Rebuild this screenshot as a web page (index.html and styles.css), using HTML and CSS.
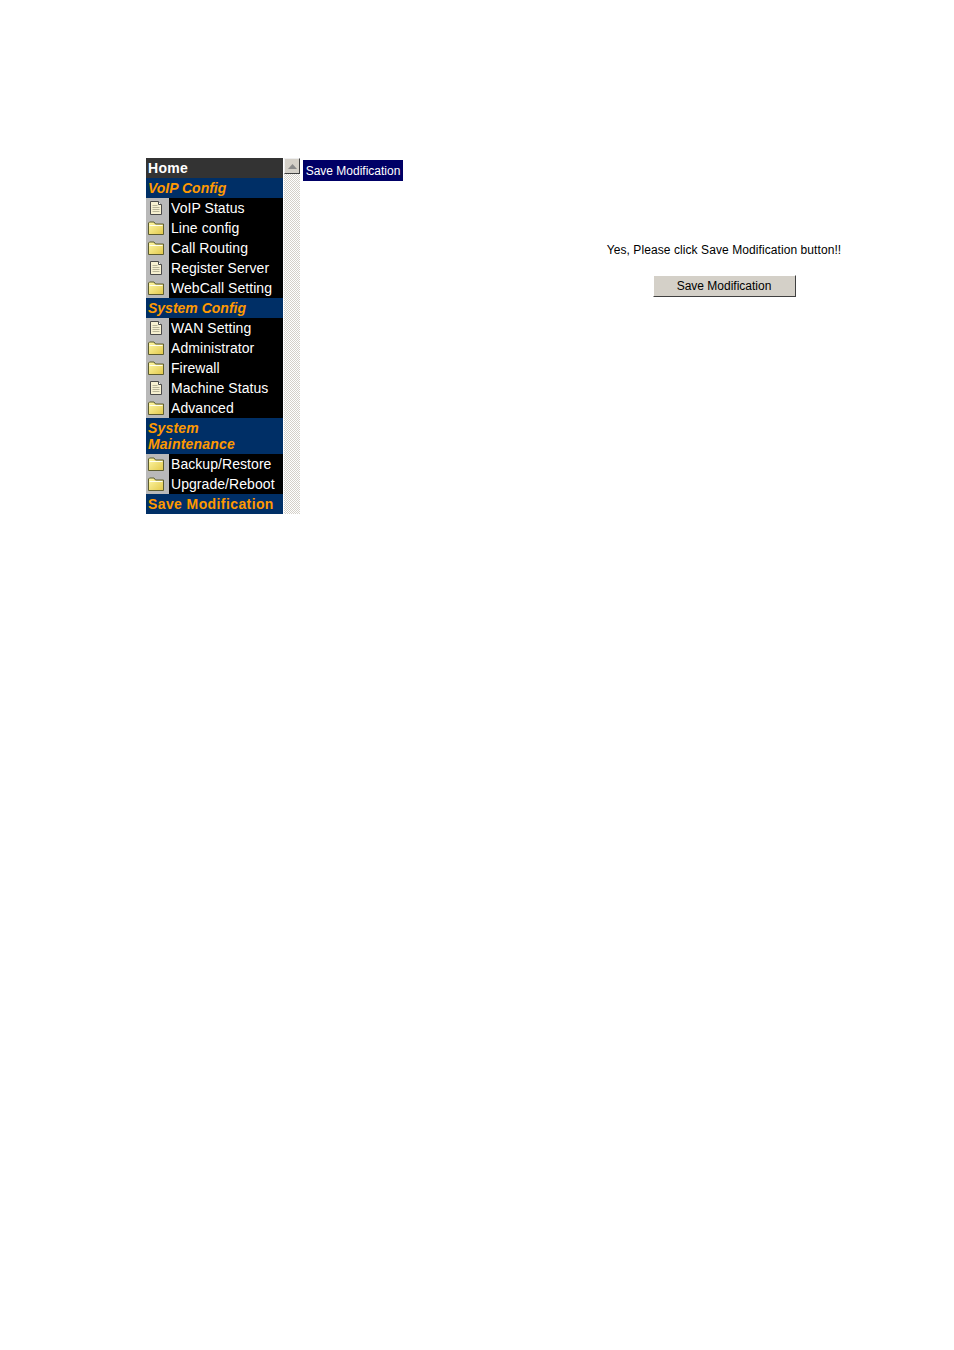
FILE: index.html
```html
<!DOCTYPE html>
<html lang="en">
<head>
    <meta charset="UTF-8">
    <title>Save Modification</title>
    <link rel="stylesheet" href="styles.css">
</head>
<body>
    <svg class="icon-defs" width="0" height="0">
        <defs>
            <linearGradient id="folderFill" x1="0" y1="0" x2="1" y2="1">
                <stop offset="0" stop-color="#fff9a8"/>
                <stop offset="1" stop-color="#e2c84a"/>
            </linearGradient>
            <symbol id="page" viewBox="0 0 16 16">
                <path d="M2.500 1.500H10.500L13.500 4.500V14.500H2.500Z" fill="#f6f0d0" stroke="#4a4a4a"/>
                <path d="M10.500 1.500V4.500H13.500" fill="#fff" stroke="#4a4a4a"/>
                <path d="M4.500 5.500H9.500M4.500 7.500H11.500M4.500 9.500H11.500M4.500 11.500H11.500" stroke="#b8b498"/>
            </symbol>
            <symbol id="folder" viewBox="0 0 16 16">
                <path d="M0.500 14.500V3L1.500 2H6L7.500 4H15.500V14.500Z" fill="url(#folderFill)" stroke="#5c5c30"/>
                <path d="M1.500 5.500H14.500" stroke="#fffff0"/>
            </symbol>
        </defs>
    </svg>

    <div class="frame">
        <nav class="menu">
            <div class="menu-title">Home</div>

            <div class="menu-section">VoIP Config</div>
            <div class="menu-item"><span class="menu-icon"><svg><use href="#page"/></svg></span><span class="menu-label">VoIP Status</span></div>
            <div class="menu-item"><span class="menu-icon"><svg><use href="#folder"/></svg></span><span class="menu-label">Line config</span></div>
            <div class="menu-item"><span class="menu-icon"><svg><use href="#folder"/></svg></span><span class="menu-label">Call Routing</span></div>
            <div class="menu-item"><span class="menu-icon"><svg><use href="#page"/></svg></span><span class="menu-label">Register Server</span></div>
            <div class="menu-item"><span class="menu-icon"><svg><use href="#folder"/></svg></span><span class="menu-label">WebCall Setting</span></div>

            <div class="menu-section">System Config</div>
            <div class="menu-item"><span class="menu-icon"><svg><use href="#page"/></svg></span><span class="menu-label">WAN Setting</span></div>
            <div class="menu-item"><span class="menu-icon"><svg><use href="#folder"/></svg></span><span class="menu-label">Administrator</span></div>
            <div class="menu-item"><span class="menu-icon"><svg><use href="#folder"/></svg></span><span class="menu-label">Firewall</span></div>
            <div class="menu-item"><span class="menu-icon"><svg><use href="#page"/></svg></span><span class="menu-label">Machine Status</span></div>
            <div class="menu-item"><span class="menu-icon"><svg><use href="#folder"/></svg></span><span class="menu-label">Advanced</span></div>

            <div class="menu-section menu-section-wrap">System<br>Maintenance</div>
            <div class="menu-item"><span class="menu-icon"><svg><use href="#folder"/></svg></span><span class="menu-label">Backup/Restore</span></div>
            <div class="menu-item"><span class="menu-icon"><svg><use href="#folder"/></svg></span><span class="menu-label">Upgrade/Reboot</span></div>

            <div class="menu-save">Save Modification</div>
        </nav>

        <div class="scrollbar">
            <div class="scroll-btn"><svg width="9" height="5" viewBox="0 0 9 5"><path d="M4.500 0L9 5H0Z" fill="#8a8a8a"/></svg></div>
        </div>

        <main class="content">
            <div class="banner">Save Modification</div>
            <div class="message">
                <p class="message-text">Yes, Please click Save Modification button!!</p>
                <button class="save-btn">Save Modification</button>
            </div>
        </main>
    </div>
</body>
</html>
```
FILE: styles.css
```css
body {
    margin: 0;
    padding: 158px 0 0 146px;
    background: #fff;
    font-family: "Liberation Sans", Arial, sans-serif;
    color: #000;
}
.icon-defs {
    position: absolute;
}
.frame {
    display: flex;
    align-items: flex-start;
}
.menu {
    width: 137px;
    margin-right: 1px;
    background: #000;
}
.menu-title {
    height: 20px;
    line-height: 20px;
    padding-left: 2px;
    background: #333;
    color: #fff;
    font-size: 14px;
    font-weight: bold;
    letter-spacing: 0.3px;
}
.menu-section {
    height: 20px;
    line-height: 20px;
    padding-left: 2px;
    background: #002f66;
    color: #f90;
    font-size: 14px;
    font-weight: bold;
    font-style: italic;
}
.menu-section-wrap {
    height: 32px;
    padding: 2px 0 2px 2px;
    line-height: 16px;
    letter-spacing: 0.2px;
}
.menu-item {
    display: flex;
    height: 20px;
}
.menu-icon {
    display: flex;
    align-items: center;
    width: 23px;
    background: #b9b9b9;
}
.menu-icon svg {
    width: 16px;
    height: 16px;
    margin-left: 2px;
}
.menu-label {
    padding-left: 2px;
    line-height: 20px;
    color: #fff;
    font-size: 14px;
    letter-spacing: 0.06px;
}
.menu-save {
    height: 20px;
    line-height: 20px;
    padding-left: 2px;
    background: #002f66;
    color: #f90;
    font-size: 14px;
    font-weight: bold;
    letter-spacing: 0.4px;
}
.scrollbar {
    width: 16px;
    height: 356px;
    background: repeating-conic-gradient(#fff 0 25%, #d4d0c8 0 50%) 0 0 / 2px 2px;
}
.scroll-btn {
    display: flex;
    align-items: center;
    justify-content: center;
    box-sizing: border-box;
    height: 16px;
    background: #d4d0c8;
    border: 1px solid;
    border-color: #eee #404040 #404040 #eee;
}
.content {
    padding: 2px 0 0 3px;
}
.banner {
    width: 100px;
    height: 21px;
    line-height: 22px;
    text-align: center;
    background: #000066;
    color: #fff;
    font-size: 12px;
}
.message {
    width: 300px;
    margin: 61px 0 0 271px;
    text-align: center;
}
.message-text {
    margin: 0 0 17px;
    font-size: 12px;
    line-height: 16px;
    letter-spacing: 0.08px;
}
.save-btn {
    width: 143px;
    height: 22px;
    padding: 0;
    background: #d4d0c8;
    border: 1px solid;
    border-color: #fff #404040 #404040 #fff;
    color: #000;
    font-family: inherit;
    font-size: 12px;
}
```
